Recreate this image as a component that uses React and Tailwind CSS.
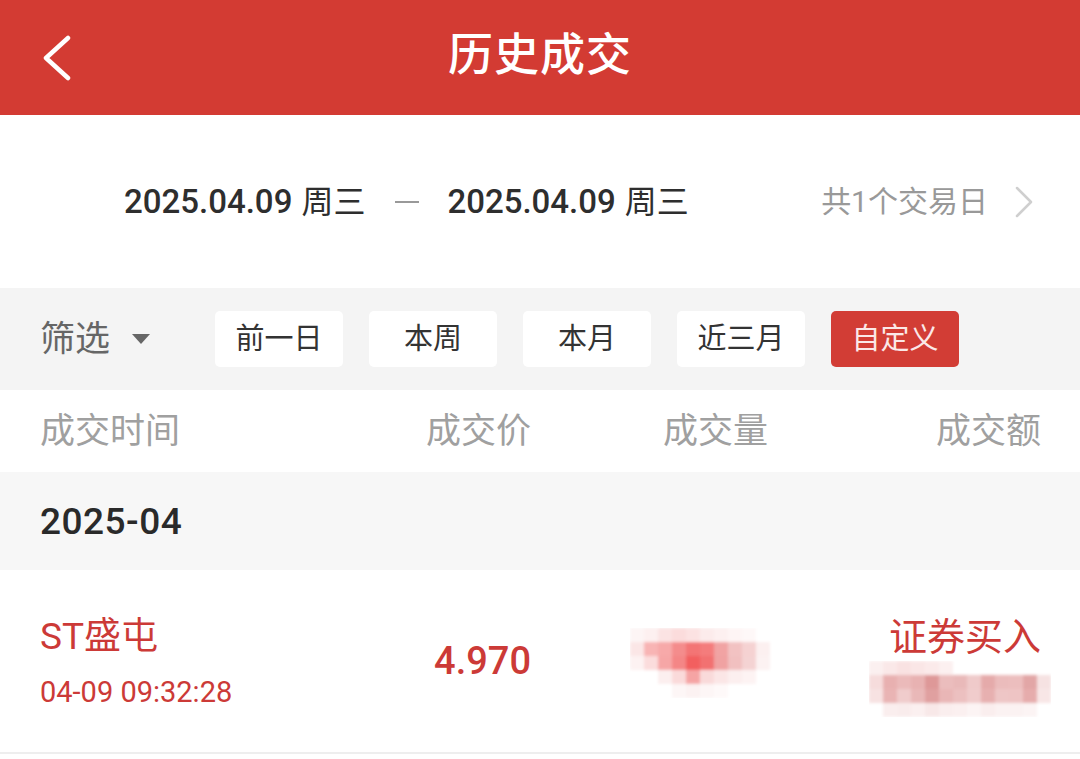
import React from "react";

const FONT = { fontFamily: 'Roboto, "Noto Sans CJK SC", "Noto Sans", sans-serif' };

function Mosaic({ cells, size, cols, width, height }) {
  return (
    <svg width={width} height={height} viewBox={`0 0 ${width} ${height}`}>
      <defs>
        <filter id={`b${width}`} x="-20%" y="-20%" width="140%" height="140%">
          <feGaussianBlur stdDeviation="1.6" />
        </filter>
      </defs>
      <g filter={`url(#b${width})`}>
        {cells.map((c, i) =>
          c ? (
            <rect
              key={i}
              x={(i % cols) * size}
              y={Math.floor(i / cols) * size}
              width={size}
              height={size}
              fill={c}
            />
          ) : null
        )}
      </g>
    </svg>
  );
}

const qtyCells = [
  "#fdf5f5", "#fdf0f0", "#fbe3e3", "#fbdcdc", "#fce2e2", "#fcebeb", "#fdf0f0", "#fef5f5", "#fef8f8", null, null,
  "#fbe6e6", "#f8b4b4", "#f7a9a9", "#f48c8c", "#f37474", "#f47c7c", "#f1a3a3", "#f2c2c2", "#f5d2d2", "#fcf0f0", null,
  "#fdf2f2", "#fbdcdc", "#f6a6a6", "#f48686", "#f25f5f", "#f27171", "#f0a2a2", "#f1c0c0", "#f4d3d3", "#fcf2f2", null,
  null, null, "#fcefef", "#fadada", "#f5a4a4", "#f9dada", "#fbe6e6", "#fcefef", "#fdf3f3", null, null,
  null, null, null, "#fdf6f6", "#fcf2f2", "#fdf6f6", "#fef9f9", null, null, null, null,
];

const amtCells = [
  "#fbf0f0", "#fae8e8", "#f9e2e2", "#fae6e6", "#fbeaea", "#fcf0f0", null, null, null, null, null, null, null,
  "#f6dcdc", "#e8b0b0", "#ebbaba", "#e8b2b2", "#de9898", "#ebbdbd", "#e9b9b9", "#efcaca", "#e5aaaa", "#ebbcbc", "#ecbebe", "#e2a6a6", "#f6e2e2",
  "#f7e2e2", "#e9b4b4", "#f0cccc", "#e9b8b8", "#e0a0a0", "#e9b6b6", "#ecc0c0", "#f0cccc", "#e7b0b0", "#eec6c6", "#eec4c4", "#e6acac", "#f8e6e6",
  null, "#faeeee", "#f9ecec", "#fbf0f0", "#f8e8e8", "#faeeee", "#fbf0f0", "#fcf4f4", "#faeeee", "#fbf2f2", "#fbf2f2", "#fcf4f4", null,
];

export default function App() {
  return (
    <div className="w-[1080px] h-[759px] overflow-hidden bg-white flex flex-col" style={FONT}>
      {/* Header */}
      <div className="h-[115px] bg-[#d33b33] grid grid-cols-[1fr_auto_1fr] items-center shrink-0">
        <div className="pl-[40px] flex items-center">
          <svg width="34" height="46" viewBox="0 0 34 46">
            <polyline
              points="28,3 6,23 28,43"
              fill="none"
              stroke="white"
              strokeWidth="4.5"
              strokeLinecap="round"
              strokeLinejoin="round"
            />
          </svg>
        </div>
        <div className="text-white text-[45px] font-medium tracking-[1px] leading-none pb-[4px]">历史成交</div>
        <div />
      </div>

      {/* Date range */}
      <div className="h-[173px] flex items-center shrink-0 pl-[124px] pr-[46px]">
        <div className="flex items-center text-[#2e2e2e] text-[32px] leading-none">
          <span className="text-[33px] font-medium">2025.04.09</span>
          <span className="ml-[9px]">周三</span>
          <span className="ml-[30px] w-[24px] h-[2px] bg-[#999]" />
          <span className="ml-[28px] text-[33px] font-medium">2025.04.09</span>
          <span className="ml-[9px]">周三</span>
        </div>
        <div className="ml-auto flex items-center text-[#999] text-[30px] leading-none">
          <span>共1个交易日</span>
          <svg className="ml-[26px]" width="20" height="32" viewBox="0 0 20 32">
            <polyline
              points="3,2 17,16 3,30"
              fill="none"
              stroke="#cfcfcf"
              strokeWidth="2.5"
              strokeLinecap="round"
              strokeLinejoin="round"
            />
          </svg>
        </div>
      </div>

      {/* Filter bar */}
      <div className="h-[102px] bg-[#f4f4f4] flex items-center pl-[40px] shrink-0">
        <div className="flex items-center w-[175px]">
          <span className="text-[#666] text-[35px] leading-none">筛选</span>
          <svg className="ml-[22px]" width="18" height="11" viewBox="0 0 18 11">
            <polygon points="0,0 18,0 9,10" fill="#666" />
          </svg>
        </div>
        <div className="flex items-center gap-[26px]">
          {["前一日", "本周", "本月", "近三月"].map((t) => (
            <div
              key={t}
              className="w-[128px] h-[56px] rounded-[5px] bg-white flex items-center justify-center text-[#333] text-[29px] leading-none"
            >
              {t}
            </div>
          ))}
          <div className="w-[128px] h-[56px] rounded-[5px] bg-[#d23d35] flex items-center justify-center text-[#fbe8e8] text-[29px] leading-none">
            自定义
          </div>
        </div>
      </div>

      {/* Table header */}
      <div className="h-[82px] grid grid-cols-[371px_120px_237px_273px] items-center pl-[40px] shrink-0 text-[#a0a0a0] text-[35px] leading-none">
        <div>成交时间</div>
        <div className="text-right">成交价</div>
        <div className="text-right">成交量</div>
        <div className="text-right">成交额</div>
      </div>

      {/* Month row */}
      <div className="h-[98px] bg-[#f7f7f7] flex items-center pl-[40px] shrink-0">
        <span className="text-[#2a2a2a] text-[37px] font-medium leading-none tracking-[0.5px]">2025-04</span>
      </div>

      {/* Data row */}
      <div className="h-[184px] grid grid-cols-[371px_120px_237px_273px] pl-[40px] border-b-[2px] border-[#eeeeee] shrink-0 text-[#cc3a37]">
        <div className="flex flex-col pt-[45px]">
          <span className="text-[37px] leading-[44px]">ST盛屯</span>
          <span className="mt-[15px] text-[29px] leading-[36px]">04-09 09:32:28</span>
        </div>
        <div className="flex items-center justify-end">
          <span className="text-[38px] font-medium leading-none">4.970</span>
        </div>
        <div className="flex items-start justify-end pt-[58px]">
          <div className="mr-[-16px]">
            <Mosaic cells={qtyCells} size={14} cols={11} width={154} height={70} />
          </div>
        </div>
        <div className="flex flex-col items-end pt-[45px]">
          <span className="text-[38px] leading-[44px]">证券买入</span>
          <div className="mt-[2px] mr-[-10px]">
            <Mosaic cells={amtCells} size={14} cols={13} width={182} height={56} />
          </div>
        </div>
      </div>
      <div className="flex-1 bg-white" />
    </div>
  );
}
